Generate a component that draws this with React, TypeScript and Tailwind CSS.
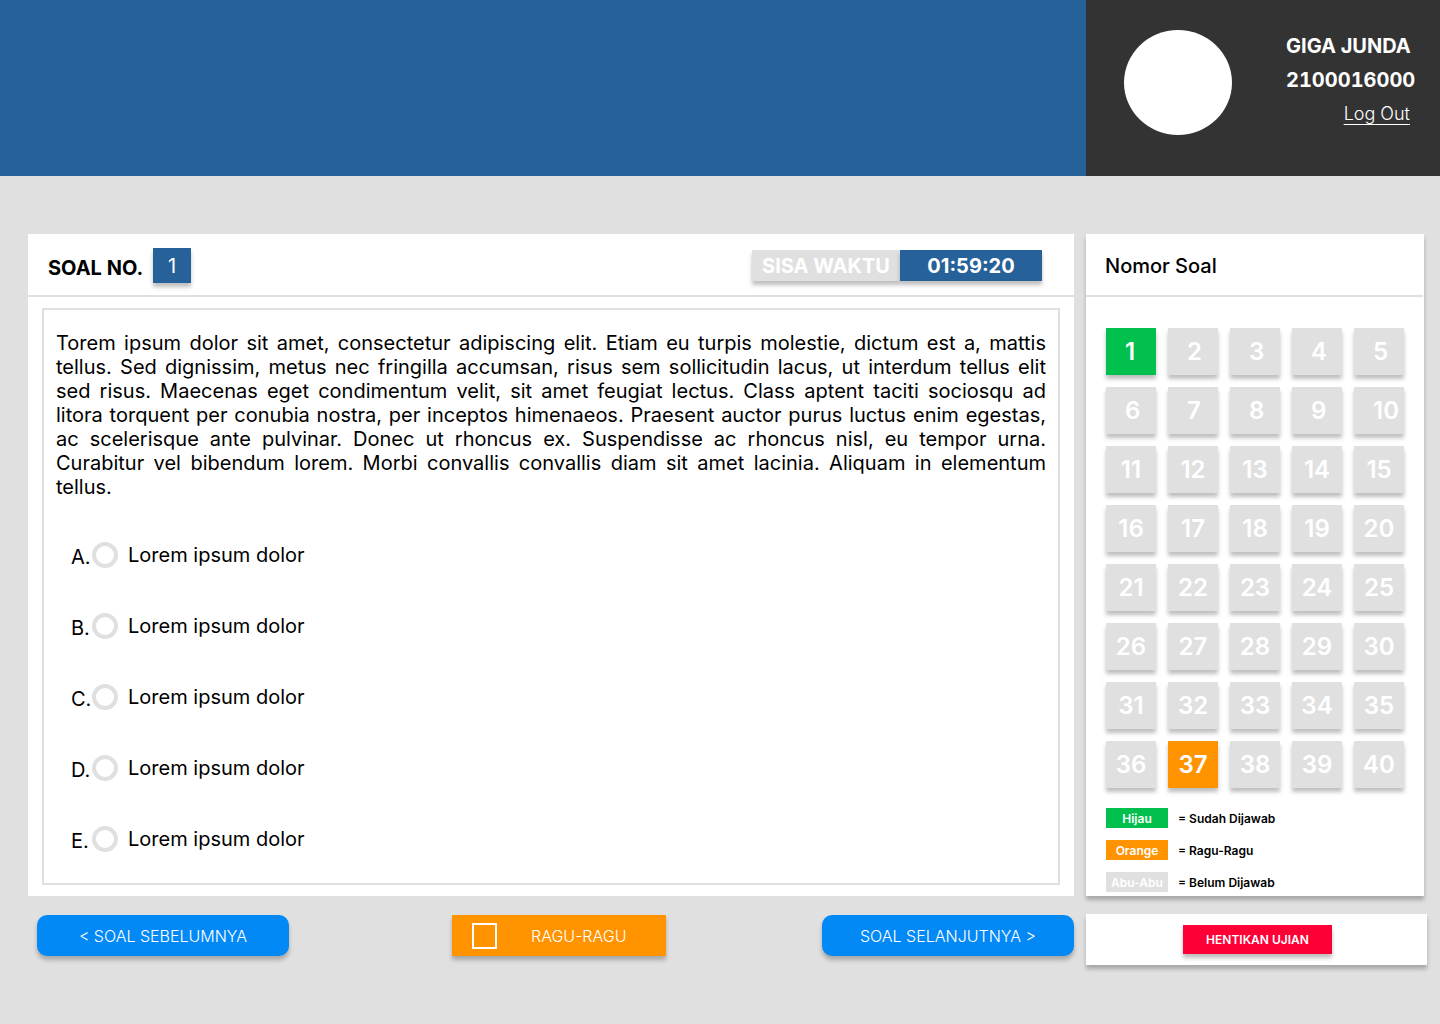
import { useState } from "react";

const SHADOW = "shadow-[0_4px_4px_rgba(0,0,0,0.25)]";

const QUESTION =
  "Torem ipsum dolor sit amet, consectetur adipiscing elit. Etiam eu turpis molestie, dictum est a, mattis tellus. Sed dignissim, metus nec fringilla accumsan, risus sem sollicitudin lacus, ut interdum tellus elit sed risus. Maecenas eget condimentum velit, sit amet feugiat lectus. Class aptent taciti sociosqu ad litora torquent per conubia nostra, per inceptos himenaeos. Praesent auctor purus luctus enim egestas, ac scelerisque ante pulvinar. Donec ut rhoncus ex. Suspendisse ac rhoncus nisl, eu tempor urna. Curabitur vel bibendum lorem. Morbi convallis convallis diam sit amet lacinia. Aliquam in elementum tellus.";

const OPTIONS = ["A", "B", "C", "D", "E"];
const NUMBERS = Array.from({ length: 40 }, (_, i) => i + 1);

const LEGEND = [
  { name: "Hijau", color: "bg-[#02c04e]", meaning: "= Sudah Dijawab" },
  { name: "Orange", color: "bg-[#ff9300]", meaning: "= Ragu-Ragu" },
  { name: "Abu-Abu", color: "bg-[#e0e0e0]", meaning: "= Belum Dijawab" },
];

function numberColor(n: number) {
  if (n === 1) return "bg-[#02c04e]";
  if (n === 37) return "bg-[#ff9300]";
  return "bg-[#e0e0e0]";
}

function Header() {
  return (
    <header className="flex h-44">
      <div className="flex-1 bg-[#266199]" />
      <div className="flex w-[354px] items-start justify-between bg-[#333333] pt-[30px] pr-[26px] pl-[38px] text-white">
        <div className="h-[105px] w-[108px] rounded-[50%] bg-white" />
        <div className="flex w-[128px] flex-col gap-2.5 pt-1 text-xl leading-6 font-bold">
          <p>GIGA JUNDA</p>
          <p className="tabular-nums">2100016000</p>
          <a
            href="#logout"
            className="mr-1 self-end text-lg leading-6 font-light underline decoration-1 underline-offset-4 [text-decoration-skip-ink:none]"
          >
            Log Out
          </a>
        </div>
      </div>
    </header>
  );
}

function QuestionPanel() {
  const [answer, setAnswer] = useState("");
  return (
    <section className="bg-white pb-[11px]">
      <div className="flex items-start justify-between border-b-2 border-[#e0e0e0] pt-3.5 pr-8 pb-3 pl-5">
        <div className="flex items-start gap-2.5">
          <h1 className="pt-2 text-xl leading-6 font-bold">SOAL NO.</h1>
          <span className={`w-[38px] bg-[#266199] pt-px text-center text-xl leading-[34px] text-white ${SHADOW}`}>1</span>
        </div>
        <div className="mt-0.5 flex text-center text-xl leading-[30px] font-bold text-white">
          <span className={`w-[148px] bg-[#e0e0e0] pt-px ${SHADOW}`}>SISA WAKTU</span>
          <time className={`w-[142px] bg-[#266199] pt-px ${SHADOW}`}>01:59:20</time>
        </div>
      </div>
      <div className="mx-3.5 mt-[11px] border-2 border-[#e0e0e0] px-3 pt-[21px] pb-[30px] text-xl leading-6">
        <p className="text-justify">{QUESTION}</p>
        <fieldset className="mt-[42px] flex flex-col items-start gap-[43px] pl-[15px]">
          {OPTIONS.map((letter) => (
            <label key={letter} className="flex items-center">
              <span className="w-[21px] pt-1">{letter}.</span>
              <input
                type="radio"
                name="answer"
                value={letter}
                checked={answer === letter}
                onChange={() => setAnswer(letter)}
                className="size-[26px] appearance-none rounded-full border-4 border-[#e0e0e0] bg-white checked:bg-[#266199]"
              />
              <span className="ml-2.5">Lorem ipsum dolor</span>
            </label>
          ))}
        </fieldset>
      </div>
    </section>
  );
}

function Actions() {
  return (
    <div className="flex pl-[9px] text-base leading-10 font-light text-white">
      <button type="button" className={`w-[252px] rounded-[10px] bg-[#0389f6] ${SHADOW}`}>
        &lt; SOAL SEBELUMNYA
      </button>
      <label className={`mr-auto ml-[163px] flex w-[214px] items-center bg-[#ff9300] pl-5 ${SHADOW}`}>
        <input
          type="checkbox"
          className="h-[26px] w-[25px] appearance-none border-2 border-white checked:bg-white"
        />
        <span className="ml-[34px] pt-px">RAGU-RAGU</span>
      </label>
      <button type="button" className={`w-[252px] rounded-[10px] bg-[#0389f6] ${SHADOW}`}>
        SOAL SELANJUTNYA &gt;
      </button>
    </div>
  );
}

function NumberPanel() {
  return (
    <section className={`mr-[3px] bg-white pb-1 ${SHADOW}`}>
      <h2 className="mr-px border-b-2 border-[#e0e0e0] pt-5 pb-[17px] pl-[19px] text-xl leading-6 font-medium">
        Nomor Soal
      </h2>
      <div className="mt-[31px] grid grid-cols-5 gap-3 px-5 text-2xl leading-[47px] font-semibold text-white">
        {NUMBERS.map((n) => (
          <button
            key={n}
            type="button"
            className={`${SHADOW} ${numberColor(n)} ${n <= 10 ? "pl-[19px] text-left" : "text-center"}`}
          >
            {n}
          </button>
        ))}
      </div>
      <dl className="mt-5 flex flex-col gap-3 px-5 text-xs leading-5 font-semibold">
        {LEGEND.map((item) => (
          <div key={item.name} className="flex gap-2.5">
            <dt className={`w-[62px] pt-px text-center leading-[19px] text-white ${item.color}`}>{item.name}</dt>
            <dd className="pt-px leading-[19px]">{item.meaning}</dd>
          </div>
        ))}
      </dl>
    </section>
  );
}

export default function App() {
  return (
    <div className="min-h-screen bg-[#e0e0e0] font-['Inter',sans-serif] text-black">
      <Header />
      <main className="flex items-start gap-3 pt-[58px] pr-[13px] pb-14 pl-7">
        <div className="flex min-w-0 flex-1 flex-col gap-[19px]">
          <QuestionPanel />
          <Actions />
        </div>
        <aside className="flex w-[341px] flex-col gap-[18px]">
          <NumberPanel />
          <div className={`flex justify-center bg-white py-[11px] pr-3.5 pl-4 text-xs leading-[29px] font-semibold text-white ${SHADOW}`}>
            <button type="button" className={`w-[149px] bg-[#ff0036] ${SHADOW}`}>
              HENTIKAN UJIAN
            </button>
          </div>
        </aside>
      </main>
    </div>
  );
}
